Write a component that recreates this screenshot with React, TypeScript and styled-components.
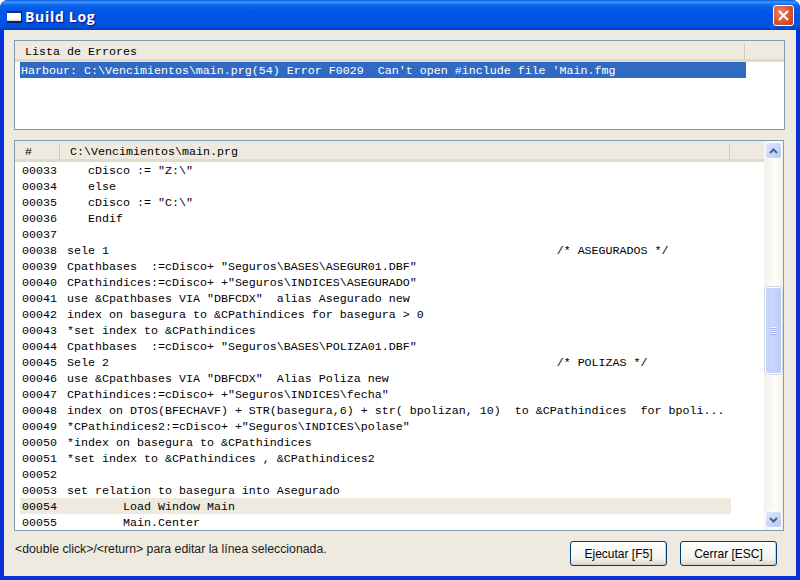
import React, { FC } from "react"
import styled, { createGlobalStyle } from "styled-components"

const GlobalStyle = createGlobalStyle`
  html, body {
    margin: 0;
    padding: 0;
    width: 800px;
    height: 580px;
    overflow: hidden;
    background: #ffffff;
  }
`

const CODE_LINES: string[] = [
  '   cDisco := "Z:\\"',
  "   else",
  '   cDisco := "C:\\"',
  "   Endif",
  "",
  "sele 1                                                                /* ASEGURADOS */",
  'Cpathbases  :=cDisco+ "Seguros\\BASES\\ASEGUR01.DBF"',
  'CPathindices:=cDisco+ +"Seguros\\INDICES\\ASEGURADO"',
  'use &Cpathbases VIA "DBFCDX"  alias Asegurado new',
  "index on basegura to &CPathindices for basegura > 0",
  "*set index to &CPathindices",
  'Cpathbases  :=cDisco+ "Seguros\\BASES\\POLIZA01.DBF"',
  "Sele 2                                                                /* POLIZAS */",
  'use &Cpathbases VIA "DBFCDX"  Alias Poliza new',
  'CPathindices:=cDisco+ +"Seguros\\INDICES\\fecha"',
  "index on DTOS(BFECHAVF) + STR(basegura,6) + str( bpolizan, 10)  to &CPathindices  for bpoli...",
  '*CPathindices2:=cDisco+ +"Seguros\\INDICES\\polase"',
  "*index on basegura to &CPathindices",
  "*set index to &CPathindices , &CPathindices2",
  "",
  "set relation to basegura into Asegurado",
  "        Load Window Main",
  "        Main.Center",
]

const FIRST_LINE = 33
const CURRENT_LINE = 54

const Win = styled.div`
  width: 800px;
  height: 580px;
  display: flex;
  flex-direction: column;
  background: #0831d9;
  border-radius: 8px 8px 0 0;
  overflow: hidden;
`

const TitleBar = styled.div`
  height: 30px;
  flex: none;
  box-sizing: border-box;
  display: flex;
  align-items: center;
  gap: 3px;
  padding: 3px 6px 0 7px;
  background: linear-gradient(
    to bottom,
    #0a5ae4 0,
    #3d95ff 2px,
    #0a66ea 5px,
    #0055e5 12px,
    #0054e3 22px,
    #0050d8 27px,
    #003dc0 30px
  );
`

const WinIcon = styled.div`
  width: 15px;
  height: 12px;
  background: linear-gradient(to bottom, #ffffff 70%, #c8d4ee);
  border-top: 2px solid #1b2a70;
  border-right: 1px solid #101c50;
  border-bottom: 2px solid #101c50;
  box-sizing: border-box;
  flex: none;
`

const Title = styled.div`
  flex: 1;
  color: #ffffff;
  font: bold 14px "Open Sans", "Liberation Sans", sans-serif;
  letter-spacing: 0.7px;
  text-shadow: 1px 1px 1px #0f1089;
`

const CloseBtn = styled.div`
  width: 21px;
  height: 21px;
  margin-top: -2px;
  box-sizing: border-box;
  border: 1px solid #ffffff;
  border-radius: 3px;
  background: radial-gradient(circle at 35% 35%, #e98a6c, #d4512e 60%, #b83c1c);
  display: flex;
  align-items: center;
  justify-content: center;
`

const Body = styled.div`
  flex: 1;
  min-height: 0;
  margin: 0 4px 4px;
  padding: 10px 10px 0 10px;
  background: #eeeadf;
  display: flex;
  flex-direction: column;
`

const ErrorPanel = styled.div`
  height: 90px;
  margin-right: 1px;
  flex: none;
  box-sizing: border-box;
  border: 1px solid #7f9db9;
  background: #ffffff;
  overflow: hidden;
`

const SourcePanel = styled.div`
  height: 391px;
  margin-top: 10px;
  margin-right: 2px;
  flex: none;
  box-sizing: border-box;
  border: 1px solid #7f9db9;
  background: #ffffff;
  display: flex;
  overflow: hidden;
`

const SourceMain = styled.div`
  flex: 1;
  min-width: 0;
  display: flex;
  flex-direction: column;
  overflow: hidden;
`

const Header = styled.div`
  height: 21px;
  flex: none;
  box-sizing: border-box;
  display: flex;
  background: #eeeadf;
  border-bottom: 3px solid #dedbca;
  font: 11.67px/18px "Liberation Mono", monospace;
  color: #000000;
`

const HeaderCell = styled.div<{ $width?: number }>`
  ${(p) => (p.$width ? `width: ${p.$width}px; flex: none;` : "flex: 1;")}
  box-sizing: border-box;
  padding: 2px 0 0 10px;
  white-space: pre;
  position: relative;

  &:not(:last-child)::after {
    content: "";
    position: absolute;
    right: 0;
    top: 3px;
    bottom: 0;
    width: 1px;
    background: #cfccba;
  }
`

const Rows = styled.div`
  padding-left: 5px;
  display: flex;
  flex-direction: column;
`

const ErrorRow = styled.div`
  width: 726px;
  height: 16px;
  padding: 2px 0 0 1px;
  box-sizing: border-box;
  background: #316ac5;
  color: #ffffff;
  font: 11.67px/14px "Liberation Mono", monospace;
  white-space: pre;
`

const CodeRow = styled.div<{ $current?: boolean }>`
  width: 711px;
  height: 16px;
  flex: none;
  box-sizing: border-box;
  padding-top: 2px;
  display: flex;
  background: ${(p) => (p.$current ? "#eeeadf" : "transparent")};
  color: #000000;
  font: 11.67px/14px "Liberation Mono", monospace;
  white-space: pre;
`

const LineNo = styled.div`
  width: 47px;
  flex: none;
  padding-left: 2px;
  box-sizing: border-box;
`

const LineText = styled.div`
  flex: 1;
  min-width: 0;
  overflow: hidden;
`

const ScrollBar = styled.div`
  width: 19px;
  flex: none;
  box-sizing: border-box;
  padding: 1px 1px 2px;
  display: flex;
  flex-direction: column;
  background: linear-gradient(to right, #f3f1ea, #fdfdfa 60%, #f3f1ea);
`

const ScrollBtn = styled.div`
  height: 17px;
  flex: none;
  box-sizing: border-box;
  border: 1px solid #ffffff;
  border-radius: 3px;
  background: linear-gradient(135deg, #dde6fd, #b7c9f8);
  display: flex;
  align-items: center;
  justify-content: center;
`

const Track = styled.div`
  flex: 1;
  min-height: 0;
  padding-top: 128px;
`

const Thumb = styled.div`
  height: 87px;
  box-sizing: border-box;
  border: 1px solid #ffffff;
  border-radius: 3px;
  box-shadow: 0 0 0 0.5px #a8b8dc;
  background: linear-gradient(to right, #c5d3fb, #c9d6fd 50%, #b9c9f6);
  display: flex;
  flex-direction: column;
  align-items: center;
  justify-content: center;
  gap: 1px;
`

const Grip = styled.div`
  width: 7px;
  height: 1px;
  background: #eef3ff;
  box-shadow: 0 1px 0 #a3b6ea;
`

const Footer = styled.div`
  flex: 1;
  min-height: 0;
  display: flex;
  justify-content: space-between;
  padding-top: 10px;
`

const Hint = styled.div`
  margin: 1px 0 0 1px;
  font: 12.27px/14px "Liberation Sans", Arial, sans-serif;
  color: #1a1a1a;
`

const Buttons = styled.div`
  display: flex;
  gap: 13px;
  margin-right: 9px;
`

const Btn = styled.button`
  width: 97px;
  height: 25px;
  padding: 0;
  box-sizing: border-box;
  border: 1px solid #003c74;
  border-radius: 3px;
  background: linear-gradient(to bottom, #ffffff, #f4f3ee 70%, #dcd8cc);
  box-shadow: inset -1px -1px 0 #d6d0c5;
  color: #000000;
  font: 12px "Liberation Sans", Arial, sans-serif;
`

const Chevron: FC<{ $down?: boolean }> = ({ $down }) => (
  <svg width="9" height="6" viewBox="0 0 9 6">
    <path
      d={$down ? "M1 1l3.5 3.5L8 1" : "M1 5l3.5-3.5L8 5"}
      fill="none"
      stroke="#4d6185"
      strokeWidth="2"
    />
  </svg>
)

const App: FC = (): JSX.Element => {
  return (
    <>
      <GlobalStyle />
      <Win>
        <TitleBar>
          <WinIcon />
          <Title>Build Log</Title>
          <CloseBtn>
            <svg width="11" height="11" viewBox="0 0 11 11">
              <path d="M1 1l9 9M10 1l-9 9" stroke="#ffffff" strokeWidth="2" />
            </svg>
          </CloseBtn>
        </TitleBar>
        <Body>
          <ErrorPanel>
            <Header>
              <HeaderCell $width={730}>Lista de Errores</HeaderCell>
              <HeaderCell />
            </Header>
            <Rows>
              <ErrorRow>
                {"Harbour: C:\\Vencimientos\\main.prg(54) Error F0029  Can't open #include file 'Main.fmg"}
              </ErrorRow>
            </Rows>
          </ErrorPanel>

          <SourcePanel>
            <SourceMain>
              <Header>
                <HeaderCell $width={45}>#</HeaderCell>
                <HeaderCell $width={670}>{"C:\\Vencimientos\\main.prg"}</HeaderCell>
                <HeaderCell />
              </Header>
              <Rows>
                {CODE_LINES.map((line, i) => {
                  const no = FIRST_LINE + i
                  return (
                    <CodeRow key={no} $current={no === CURRENT_LINE}>
                      <LineNo>{String(no).padStart(5, "0")}</LineNo>
                      <LineText>{line}</LineText>
                    </CodeRow>
                  )
                })}
              </Rows>
            </SourceMain>
            <ScrollBar>
              <ScrollBtn>
                <Chevron />
              </ScrollBtn>
              <Track>
                <Thumb>
                  <Grip />
                  <Grip />
                  <Grip />
                  <Grip />
                </Thumb>
              </Track>
              <ScrollBtn>
                <Chevron $down />
              </ScrollBtn>
            </ScrollBar>
          </SourcePanel>

          <Footer>
            <Hint>{"<double click>/<return> para editar la línea seleccionada."}</Hint>
            <Buttons>
              <Btn>Ejecutar [F5]</Btn>
              <Btn>Cerrar [ESC]</Btn>
            </Buttons>
          </Footer>
        </Body>
      </Win>
    </>
  )
}

export default App
